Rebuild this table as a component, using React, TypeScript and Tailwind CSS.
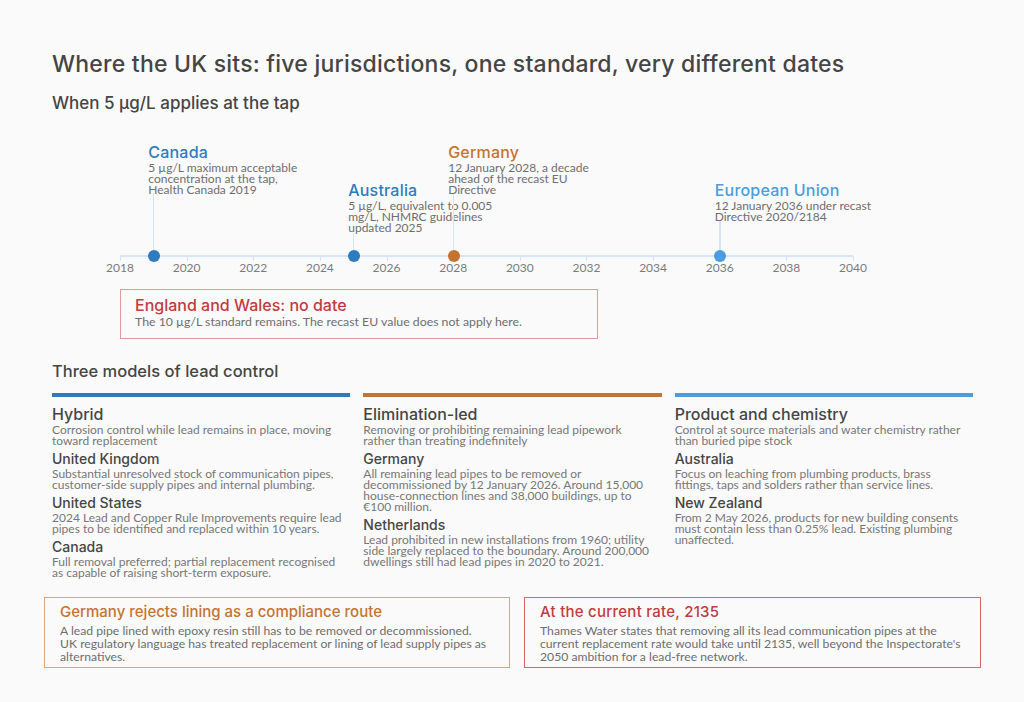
import React from "react";

const H = "font-['Inter','Noto_Sans',sans-serif]";
const B = "font-['Lato','Liberation_Sans',sans-serif]";

const X0 = 68; // axis left within content
const PX = 733 / 22;
const xOf = (y: number) => X0 + (y - 2018) * PX;

type Ev = { year: number; name: string; lines: string[]; color: string; top: number; lineTop: number };
const events: Ev[] = [
  { year: 2019, name: "Canada", lines: ["5 µg/L maximum acceptable", "concentration at the tap,", "Health Canada 2019"], color: "#2f7bbf", top: 2, lineTop: 53 },
  { year: 2025, name: "Australia", lines: ["5 µg/L, equivalent to 0.005", "mg/L, NHMRC guidelines", "updated 2025"], color: "#2f7bbf", top: 40, lineTop: 93 },
  { year: 2028, name: "Germany", lines: ["12 January 2028, a decade", "ahead of the recast EU", "Directive"], color: "#c47430", top: 2, lineTop: 53 },
  { year: 2036, name: "European Union", lines: ["12 January 2036 under recast", "Directive 2020/2184"], color: "#4a9de0", top: 40, lineTop: 80 },
];

const years = [2018, 2020, 2022, 2024, 2026, 2028, 2030, 2032, 2034, 2036, 2038, 2040];

type Item = { h: string; lines: string[] };
type Col = { color: string; title: string; desc: string[]; items: Item[] };
const cols: Col[] = [
  {
    color: "#2f7bbf",
    title: "Hybrid",
    desc: ["Corrosion control while lead remains in place, moving", "toward replacement"],
    items: [
      { h: "United Kingdom", lines: ["Substantial unresolved stock of communication pipes,", "customer-side supply pipes and internal plumbing."] },
      { h: "United States", lines: ["2024 Lead and Copper Rule Improvements require lead", "pipes to be identified and replaced within 10 years."] },
      { h: "Canada", lines: ["Full removal preferred; partial replacement recognised", "as capable of raising short-term exposure."] },
    ],
  },
  {
    color: "#c47430",
    title: "Elimination-led",
    desc: ["Removing or prohibiting remaining lead pipework", "rather than treating indefinitely"],
    items: [
      {
        h: "Germany",
        lines: [
          "All remaining lead pipes to be removed or",
          "decommissioned by 12 January 2026. Around 15,000",
          "house-connection lines and 38,000 buildings, up to",
          "€100 million.",
        ],
      },
      {
        h: "Netherlands",
        lines: [
          "Lead prohibited in new installations from 1960; utility",
          "side largely replaced to the boundary. Around 200,000",
          "dwellings still had lead pipes in 2020 to 2021.",
        ],
      },
    ],
  },
  {
    color: "#4a9de0",
    title: "Product and chemistry",
    desc: ["Control at source materials and water chemistry rather", "than buried pipe stock"],
    items: [
      { h: "Australia", lines: ["Focus on leaching from plumbing products, brass", "fittings, taps and solders rather than service lines."] },
      {
        h: "New Zealand",
        lines: ["From 2 May 2026, products for new building consents", "must contain less than 0.25% lead. Existing plumbing", "unaffected."],
      },
    ],
  },
];

function Lines({ lines, className }: { lines: string[]; className: string }) {
  return (
    <div className={className}>
      {lines.map((l) => (
        <div key={l} className="whitespace-nowrap">
          {l}
        </div>
      ))}
    </div>
  );
}

export default function App() {
  return (
    <div className="relative w-[1024px] h-[702px] bg-[#fafafa] overflow-hidden">
      <div className="pl-[52px] pr-[51px] pt-[50px]">
        <h1 className={`${H} text-[23px] leading-[28px] font-medium tracking-[0.22px] text-[#454545] whitespace-nowrap`}>
          Where the UK sits: five jurisdictions, one standard, very different dates
        </h1>
        <h2 className={`${H} mt-[14px] text-[17px] leading-[22px] font-medium text-[#454545]`}>
          When 5 µg/L applies at the tap
        </h2>

        {/* Timeline chart */}
        <div className="relative mt-[26px] h-[140px]">
          <div className="absolute top-[115px] h-[2px] bg-[#d6e6f6]" style={{ left: X0, width: 733 }} />
          {years.map((y) => (
            <React.Fragment key={y}>
              <div className="absolute top-[116px] h-[5px] w-[1px] bg-[#d6e6f6]" style={{ left: xOf(y) }} />
              <div
                className={`${B} absolute top-[121px] w-[40px] -ml-[20px] text-center text-[12px] leading-[14px] text-[#7a7a7a]`}
                style={{ left: xOf(y) }}
              >
                {y}
              </div>
            </React.Fragment>
          ))}
          {events.map((e) => (
            <React.Fragment key={e.name}>
              <div
                className="absolute w-[1.5px] bg-[#d6e6f6]"
                style={{ left: xOf(e.year) - 0.5, top: e.lineTop, height: 116 - e.lineTop }}
              />
              <div
                className="absolute top-[110px] h-[12px] w-[12px] -ml-[6px] rounded-full"
                style={{ left: xOf(e.year) + 0.5, backgroundColor: e.color }}
              />
              <div className="absolute" style={{ left: xOf(e.year) - 5, top: e.top }}>
                <div className={`${H} text-[16px] leading-[20px] font-medium tracking-[0.2px]`} style={{ color: e.color }}>
                  {e.name}
                </div>
                <Lines lines={e.lines} className={`${B} text-[12px] leading-[11px] text-[#6e6e6e]`} />
              </div>
            </React.Fragment>
          ))}
        </div>

        {/* England box */}
        <div className="mt-[9px] ml-[68px] w-[478px] h-[50px] border border-[#e39a9c] px-[14px] pt-[5px]">
          <div className={`${H} text-[16px] leading-[20px] font-medium text-[#c23b3f]`}>England and Wales: no date</div>
          <div className={`${B} text-[12.3px] leading-[14px] text-[#6e6e6e]`}>
            The 10 µg/L standard remains. The recast EU value does not apply here.
          </div>
        </div>

        <h2 className={`${H} mt-[21px] text-[16.5px] leading-[22px] font-medium text-[#454545]`}>
          Three models of lead control
        </h2>

        <div className="mt-[11px] grid grid-cols-3 gap-x-[13px]">
          {cols.map((c) => (
            <div key={c.title}>
              <div className="h-[4px]" style={{ backgroundColor: c.color }} />
              <div className={`${H} mt-[7px] text-[16px] leading-[20px] font-medium text-[#454545]`}>{c.title}</div>
              <Lines lines={c.desc} className={`${B} text-[12px] leading-[11px] text-[#777]`} />
              {c.items.map((it) => (
                <div key={it.h} className="mt-[4px]">
                  <div className={`${H} text-[14px] leading-[18px] font-medium text-[#454545]`}>{it.h}</div>
                  <Lines lines={it.lines} className={`${B} text-[12px] leading-[11px] text-[#777]`} />
                </div>
              ))}
            </div>
          ))}
        </div>
      </div>

      {/* Bottom boxes */}
      <div className="absolute top-[597px] left-0 w-[1024px] pl-[44px] pr-[43px]">
        <div className="grid grid-cols-[466px_457px] gap-x-[14px]">
          <div className="h-[71px] border border-[#e0a574] px-[15px] pt-[4px]">
            <div className={`${H} text-[15px] leading-[20px] font-medium text-[#c47430]`}>
              Germany rejects lining as a compliance route
            </div>
            <Lines
              className={`${B} mt-[2px] text-[12.2px] leading-[13px] text-[#6e6e6e]`}
              lines={[
                "A lead pipe lined with epoxy resin still has to be removed or decommissioned.",
                "UK regulatory language has treated replacement or lining of lead supply pipes as",
                "alternatives.",
              ]}
            />
          </div>
          <div className="h-[71px] border border-[#d9666a] px-[15px] pt-[4px]">
            <div className={`${H} text-[15px] leading-[20px] font-medium tracking-[0.25px] text-[#c23b3f]`}>At the current rate, 2135</div>
            <Lines
              className={`${B} mt-[2px] text-[12.2px] leading-[13px] text-[#6e6e6e]`}
              lines={[
                "Thames Water states that removing all its lead communication pipes at the",
                "current replacement rate would take until 2135, well beyond the Inspectorate's",
                "2050 ambition for a lead-free network.",
              ]}
            />
          </div>
        </div>
      </div>
    </div>
  );
}
